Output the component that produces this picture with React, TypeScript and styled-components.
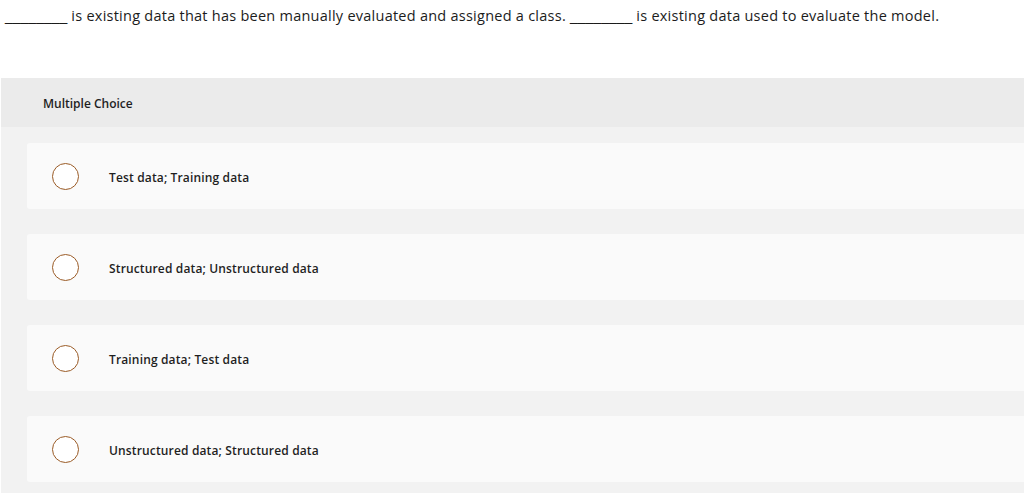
import React from 'react';
import styled, { createGlobalStyle } from 'styled-components';

const GlobalStyle = createGlobalStyle`
  html, body {
    margin: 0;
    padding: 0;
    background: #ffffff;
  }
  body {
    font-family: 'Open Sans', 'Liberation Sans', sans-serif;
    color: #1f1f1f;
  }
`;

const options = [
  'Test data; Training data',
  'Structured data; Unstructured data',
  'Training data; Test data',
  'Unstructured data; Structured data',
];

const App: React.FC = () => {
  return (
    <Page>
      <GlobalStyle />
      <Question>
        <Blank>________</Blank> is existing data that has been manually evaluated and assigned a class.{' '}
        <Blank>________</Blank> is existing data used to evaluate the model.
      </Question>
      <Panel>
        <PanelHeader>Multiple Choice</PanelHeader>
        <OptionList>
          {options.map((label) => (
            <OptionCard key={label}>
              <Radio />
              <OptionText>{label}</OptionText>
            </OptionCard>
          ))}
        </OptionList>
      </Panel>
    </Page>
  );
};

export default App;

const Page = styled.div`
  width: 1024px;
  height: 493px;
  overflow: hidden;
`;

const Question = styled.p`
  margin: 0;
  padding: 7px 0 0 5px;
  height: 78px;
  box-sizing: border-box;
  font-size: 14.5px;
  letter-spacing: 0.25px;
  line-height: 18px;
  color: #1c1c1c;
  white-space: nowrap;
`;

const Blank = styled.span`
  font-family: 'Liberation Sans', Arial, sans-serif;
  font-size: 14px;
  letter-spacing: 0;
`;

const Panel = styled.section`
  margin-left: 1px;
  background: #f2f2f2;
  height: 415px;
`;

const PanelHeader = styled.div`
  height: 49px;
  box-sizing: border-box;
  padding: 2px 0 0 42px;
  background: #ebebeb;
  display: flex;
  align-items: center;
  font-size: 12px;
  font-weight: 600;
  color: #1f1f1f;
`;

const OptionList = styled.div`
  display: flex;
  flex-direction: column;
  gap: 25px;
  padding: 16px 0 0 26px;
`;

const OptionCard = styled.div`
  height: 66px;
  background: #fafafa;
  border-radius: 3px 0 0 3px;
  display: flex;
  align-items: center;
  padding-left: 25px;
`;

const Radio = styled.span`
  width: 25px;
  height: 25px;
  border: 1.5px solid #9a5b26;
  border-radius: 50%;
  background: #ffffff;
  flex-shrink: 0;
`;

const OptionText = styled.span`
  margin-left: 30px;
  padding-top: 2px;
  font-size: 12px;
  font-weight: 600;
  letter-spacing: 0.15px;
  color: #1f1f1f;
`;
